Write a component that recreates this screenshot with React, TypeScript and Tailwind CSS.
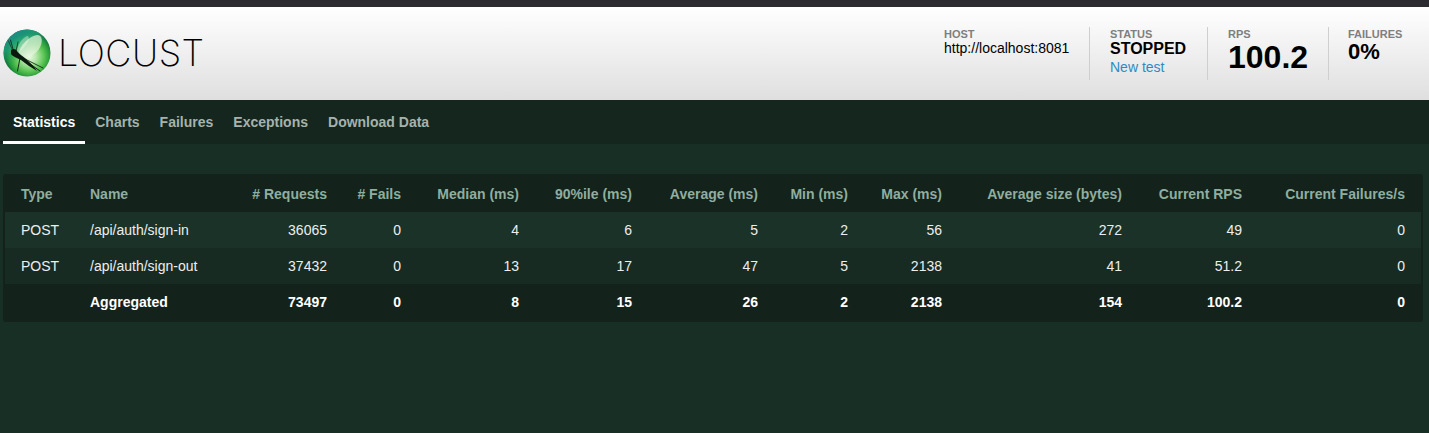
const rows = [
  { type: "POST", name: "/api/auth/sign-in", v: ["36065", "0", "4", "6", "5", "2", "56", "272", "49", "0"] },
  { type: "POST", name: "/api/auth/sign-out", v: ["37432", "0", "13", "17", "47", "5", "2138", "41", "51.2", "0"] },
];
const agg = ["73497", "0", "8", "15", "26", "2", "2138", "154", "100.2", "0"];
const heads = ["# Requests", "# Fails", "Median (ms)", "90%ile (ms)", "Average (ms)", "Min (ms)", "Max (ms)", "Average size (bytes)", "Current RPS", "Current Failures/s"];
const widths = ["w-[119px]", "w-[74px]", "w-[118px]", "w-[113px]", "w-[126px]", "w-[90px]", "w-[94px]", "w-[180px]", "w-[120px]", "w-[163px]"];

function Logo() {
  return (
    <svg width="50" height="50" viewBox="0 0 50 50" className="shrink-0">
      <defs>
        <radialGradient id="ball" cx="0.55" cy="0.58" r="0.5">
          <stop offset="0" stopColor="#eafae4" />
          <stop offset="0.3" stopColor="#b4e6a8" />
          <stop offset="0.65" stopColor="#55c24f" />
          <stop offset="0.88" stopColor="#23983a" />
          <stop offset="1" stopColor="#126a36" />
        </radialGradient>
        <linearGradient id="rim" x1="0.15" y1="0" x2="0.5" y2="0.6">
          <stop offset="0" stopColor="#16868e" stopOpacity="1" />
          <stop offset="0.5" stopColor="#25a884" stopOpacity="0.7" />
          <stop offset="1" stopColor="#2aa050" stopOpacity="0" />
        </linearGradient>
      </defs>
      <circle cx="25" cy="25" r="23.5" fill="url(#ball)" />
      <circle cx="25" cy="25" r="23.5" fill="url(#rim)" />
      <path d="M16 27 C18 17 27 8 35 7 C41 7 41 15 37 21 C33 27 24 32 18 31 Z" fill="#e8f7e0" fillOpacity="0.7" />
      <path d="M15 25 C15 17 20 10 25 8 C28 8 27 13 24 17 C21 21 18 24 15 25 Z" fill="#f0faea" fillOpacity="0.4" />
      <path d="M9 22 C11 20 14 21 15 23 C16 25 19 27 24 31 C28 35 32 38 35 43 C30 40 24 36 19 32 C15 30 10 28 9 26 Z" fill="#0b1a0f" />
      <g stroke="#0b1a0f" fill="none" strokeLinecap="round">
        <path d="M11 21 L8.5 12" strokeWidth="0.8" />
        <path d="M10 21 L6.5 13" strokeWidth="0.6" />
        <path d="M14 23 L16 14" strokeWidth="0.7" />
        <path d="M18 30 L15.5 43" strokeWidth="0.9" />
        <path d="M24 33 L38 43" strokeWidth="0.9" />
        <path d="M23 31 L41 40" strokeWidth="0.8" />
      </g>
    </svg>
  );
}

function Stat({ label, children, className }: { label: string; children: React.ReactNode; className: string }) {
  return (
    <div className={`h-[53px] flex flex-col ${className}`}>
      <span className="text-[11px] leading-[12px] font-bold text-[#7f7f7f] mt-[1px]">{label}</span>
      {children}
    </div>
  );
}

export default function App() {
  return (
    <div className="h-[433px] overflow-hidden bg-[#182f25] font-['Liberation_Sans',Arial,sans-serif]">
      <div className="h-[7px] bg-[#2d2c31]" />
      <header className="h-[93px] bg-gradient-to-b from-white to-[#dfdfdf] flex items-start">
        <div className="flex items-center h-[93px] pl-[2px] pb-[1px]">
          <Logo />
          <span className="ml-[6px] text-[36px] leading-none font-['Inter',sans-serif] font-extralight text-black tracking-[0.5px]">LOCUST</span>
        </div>
        <div className="ml-auto flex mt-[20px]">
          <Stat label="HOST" className="w-[146px] border-r border-[#cfcfcf]">
            <span className="text-[14px] leading-[16px] text-black">http://localhost:8081</span>
          </Stat>
          <Stat label="STATUS" className="w-[118px] pl-[20px] border-r border-[#cfcfcf]">
            <span className="text-[16px] leading-[18px] font-bold text-black">STOPPED</span>
            <a className="text-[14px] leading-[17px] mt-[1px] text-[#2d8bc4]">New test</a>
          </Stat>
          <Stat label="RPS" className="w-[121px] pl-[20px] border-r border-[#cfcfcf]">
            <span className="text-[32px] leading-[34px] font-bold text-black">100.2</span>
          </Stat>
          <Stat label="FAILURES" className="w-[100px] pl-[19px]">
            <span className="text-[22px] leading-[22px] mt-[1px] font-bold text-black">0%</span>
          </Stat>
        </div>
      </header>
      <nav className="h-[44px] bg-[#15261e] flex pl-[3px] text-[14px] font-bold">
        <a className="h-[44px] px-[10px] flex items-center text-white border-b-[3px] border-white pt-[3px]">Statistics</a>
        <a className="h-[44px] px-[10px] flex items-center text-[#a5b3ac] pt-[3px] pb-[3px]">Charts</a>
        <a className="h-[44px] px-[10px] flex items-center text-[#a5b3ac] pt-[3px] pb-[3px]">Failures</a>
        <a className="h-[44px] px-[10px] flex items-center text-[#a5b3ac] pt-[3px] pb-[3px]">Exceptions</a>
        <a className="h-[44px] px-[10px] flex items-center text-[#a5b3ac] pt-[3px] pb-[3px]">Download Data</a>
      </nav>
      <main className="pt-[30px] pl-[3px]">
        <div className="rounded-[3px] bg-[#13221b] w-[1420px] p-[2px]">
          <table className="table-fixed w-[1416px] text-[14px] border-collapse">
            <thead>
              <tr className="h-[36px] text-[#8fae9f]">
                <th className="w-[69px] pl-[16px] text-left font-bold">Type</th>
                <th className="w-[150px] pl-[16px] text-left font-bold">Name</th>
                {heads.map((h, i) => (
                  <th key={h} className={`pr-[16px] text-right font-bold whitespace-nowrap ${widths[i]}`}>{h}</th>
                ))}
              </tr>
            </thead>
            <tbody className="text-[#eeeeee]">
              {rows.map((r, i) => (
                <tr key={r.name} className={`h-[36px] ${i === 0 ? "bg-[#1a3228]" : "bg-[#182b23]"}`}>
                  <td className="pl-[16px]">{r.type}</td>
                  <td className="pl-[16px] whitespace-nowrap">{r.name}</td>
                  {r.v.map((c, j) => <td key={j} className="pr-[16px] text-right">{c}</td>)}
                </tr>
              ))}
              <tr className="h-[36px] font-bold text-white">
                <td />
                <td className="pl-[16px]">Aggregated</td>
                {agg.map((c, j) => <td key={j} className="pr-[16px] text-right">{c}</td>)}
              </tr>
            </tbody>
          </table>
        </div>
      </main>
    </div>
  );
}
